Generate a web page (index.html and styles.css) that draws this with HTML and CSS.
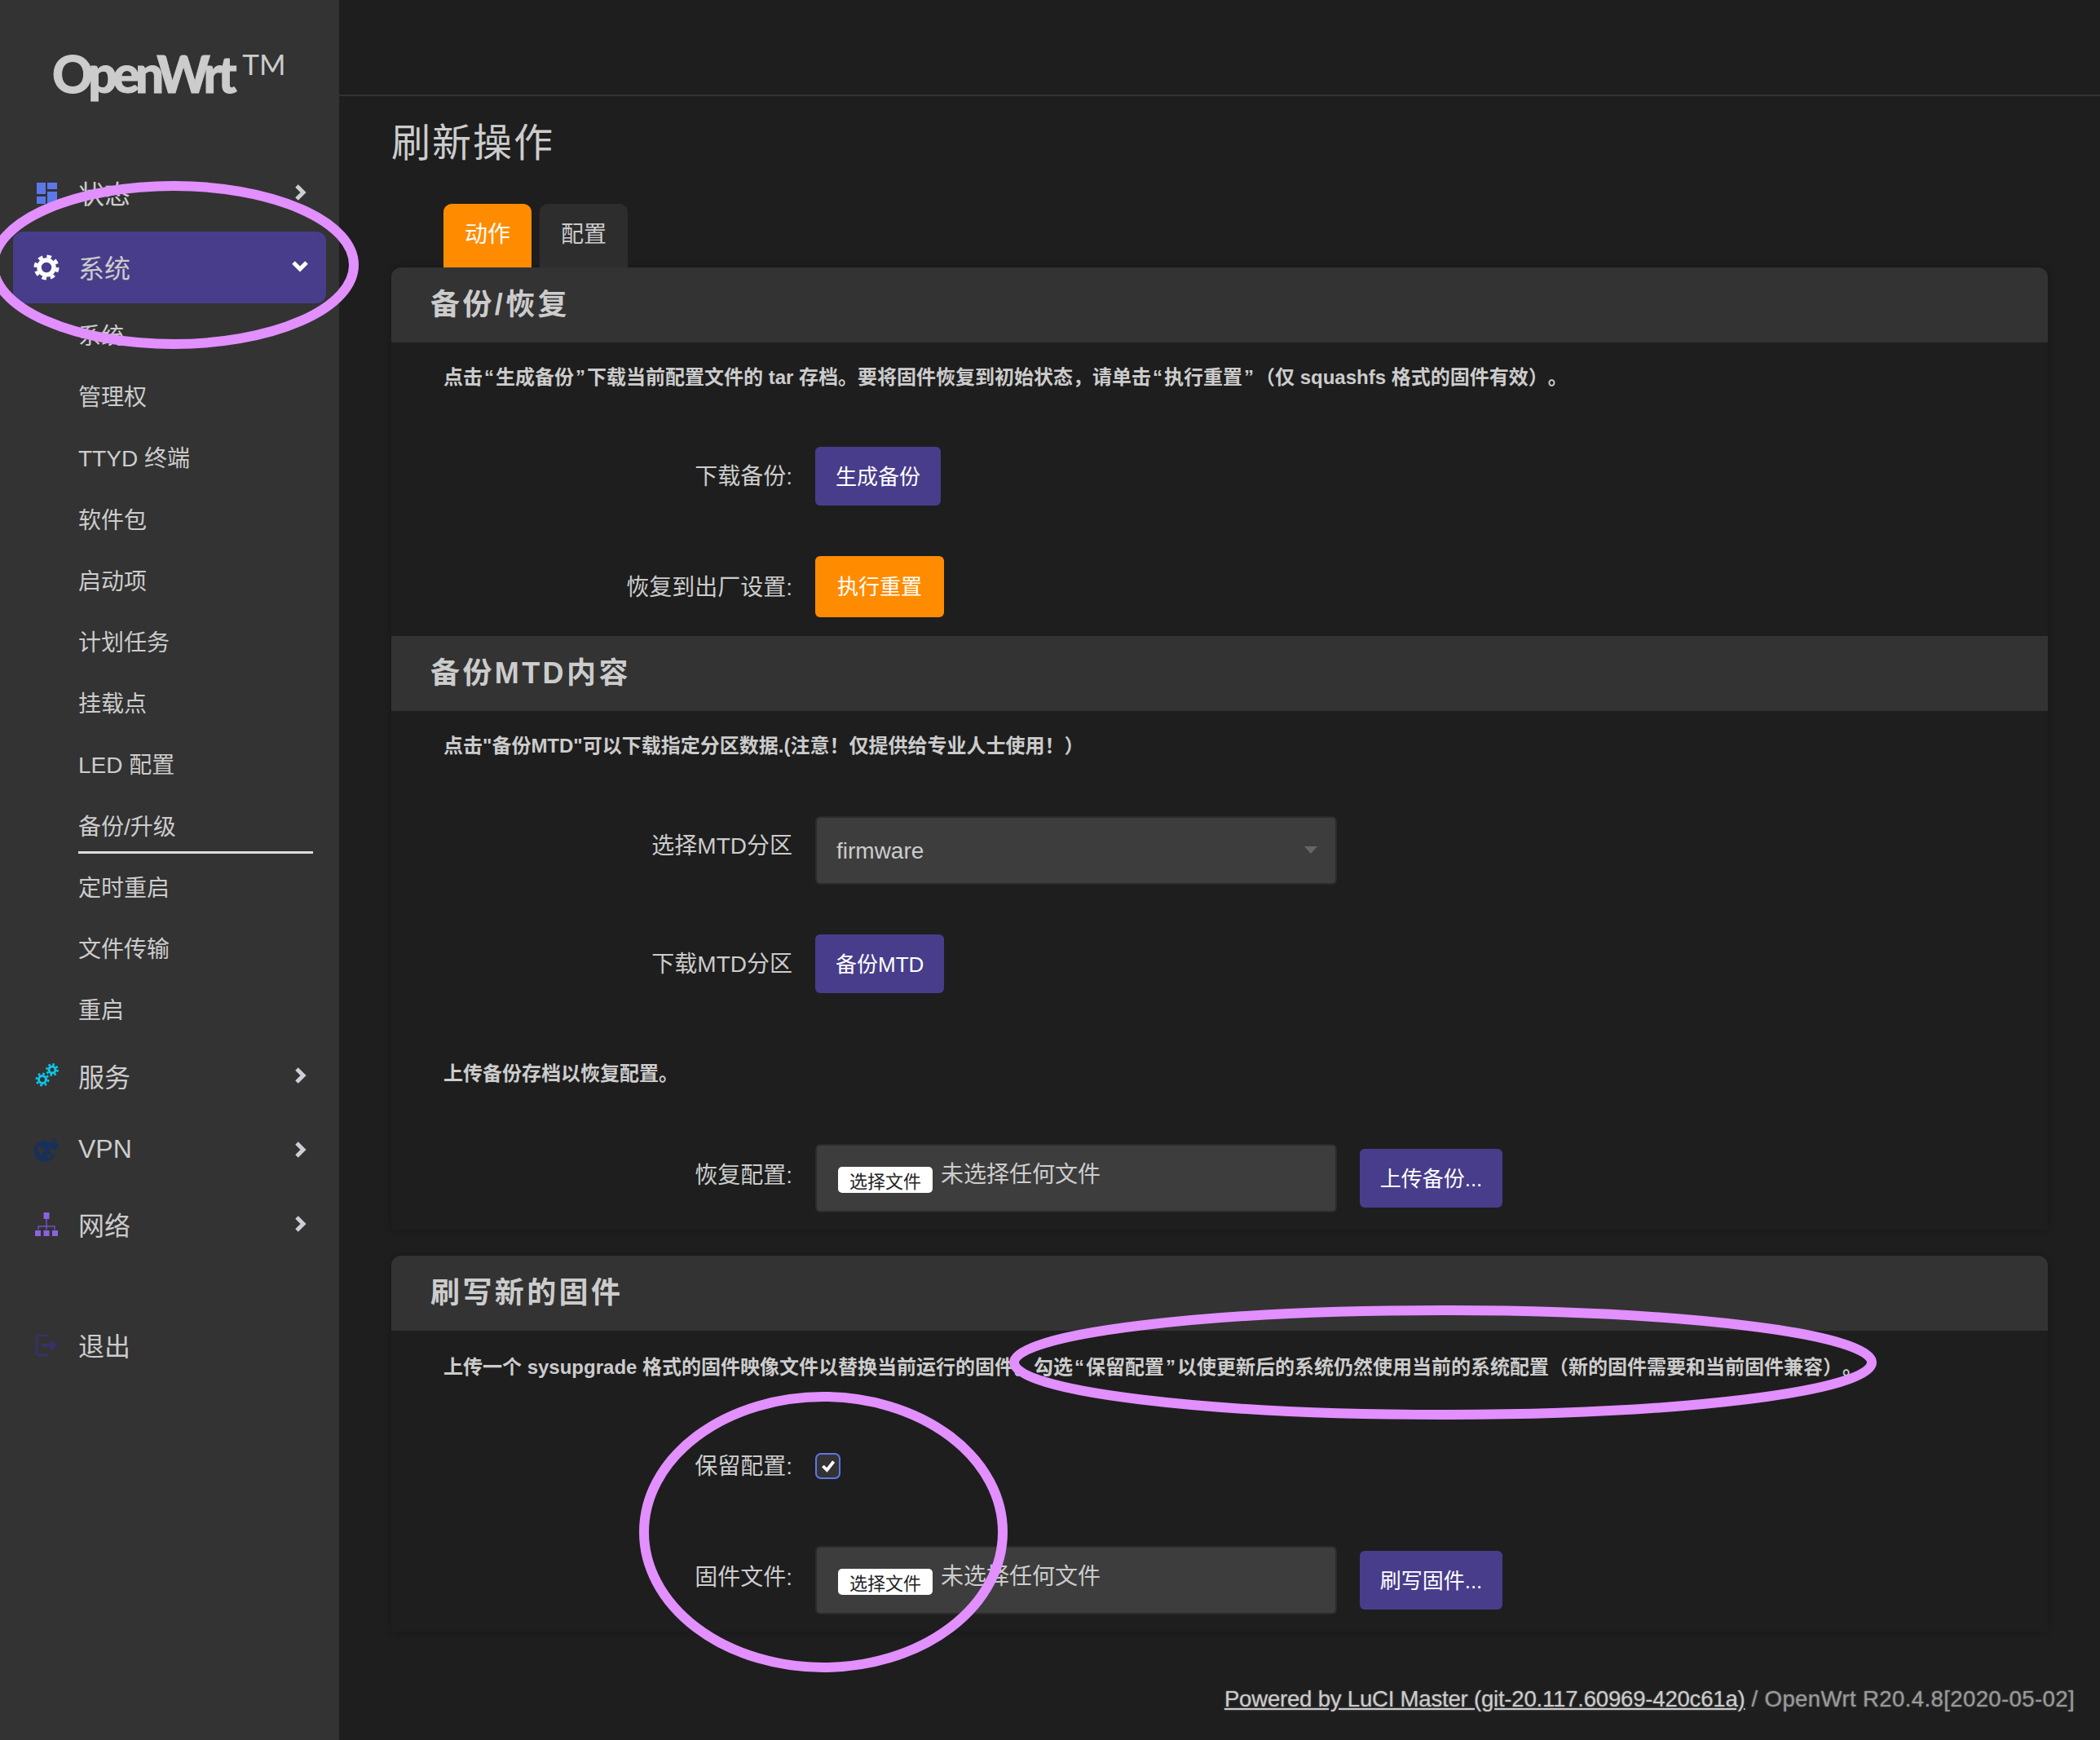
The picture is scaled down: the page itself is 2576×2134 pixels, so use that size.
FILE: index.html
```html
<!DOCTYPE html>
<html lang="zh-CN">
<head>
  <meta charset="UTF-8" />
  <title>刷新操作 - OpenWrt</title>
  <link rel="stylesheet" href="styles.css">
</head>
<body>

  <aside class="sidebar">
    <div class="logo"><span class="logo-name">OpenWrt</span><span class="logo-tm">TM</span></div>

    <a class="nav-item">
      <svg class="nav-icon" viewBox="0 0 34 34"><g fill="#5c77e8"><rect x="5" y="4" width="11" height="14"/><rect x="18" y="4" width="12" height="8"/><rect x="18" y="15" width="12" height="15"/><rect x="5" y="21" width="11" height="9"/></g></svg>
      <span>状态</span>
      <svg class="chev" viewBox="0 0 20 20"><path d="M6 2l8 8-8 8" fill="none" stroke="#ccd0d5" stroke-width="5"/></svg>
    </a>
    <a class="nav-item active">
      <svg class="nav-icon" viewBox="0 0 34 34"><g fill="none" stroke="#fff"><circle cx="17" cy="17" r="9" stroke-width="5.5"/><circle cx="17" cy="17" r="13.5" stroke-width="4" stroke-dasharray="5.6 5"/></g></svg>
      <span>系统</span>
      <svg class="chev" viewBox="0 0 20 20"><path d="M2 5l8 8 8-8" fill="none" stroke="#fff" stroke-width="5"/></svg>
    </a>
    <ul class="sub">
      <li><a>系统</a></li>
      <li><a>管理权</a></li>
      <li><a>TTYD 终端</a></li>
      <li><a>软件包</a></li>
      <li><a>启动项</a></li>
      <li><a>计划任务</a></li>
      <li><a>挂载点</a></li>
      <li><a>LED 配置</a></li>
      <li><a class="current">备份/升级</a></li>
      <li><a>定时重启</a></li>
      <li><a>文件传输</a></li>
      <li><a>重启</a></li>
    </ul>
    <a class="nav-item">
      <svg class="nav-icon" viewBox="0 0 34 34"><g fill="none" stroke="#0dc5e8"><circle cx="12" cy="21" r="4.5" stroke-width="3"/><circle cx="12" cy="21" r="7.2" stroke-width="2.6" stroke-dasharray="2.8 2.85"/><circle cx="24" cy="9" r="4" stroke-width="3"/><circle cx="24" cy="9" r="6.6" stroke-width="2.6" stroke-dasharray="2.6 2.6"/></g></svg>
      <span>服务</span>
      <svg class="chev" viewBox="0 0 20 20"><path d="M6 2l8 8-8 8" fill="none" stroke="#ccd0d5" stroke-width="5"/></svg>
    </a>
    <a class="nav-item">
      <svg class="nav-icon" viewBox="0 0 34 34"><circle cx="15" cy="18" r="13" fill="#16305c"/><path d="M6 12l6 1 3 4-3 3 2 5-4-2-3-5zM16 24l5-3 3 2-4 4z" fill="#333"/><path d="M21 5h11v14l-5 3-6-3z" fill="#333"/><rect x="21.500" y="8" width="9" height="8" rx="1" fill="#16305c"/><path d="M23.500 8V5.500a2.500 2.500 0 0 1 5 0V8" fill="none" stroke="#16305c" stroke-width="1.600"/></svg>
      <span>VPN</span>
      <svg class="chev" viewBox="0 0 20 20"><path d="M6 2l8 8-8 8" fill="none" stroke="#ccd0d5" stroke-width="5"/></svg>
    </a>
    <a class="nav-item">
      <svg class="nav-icon" viewBox="0 0 34 34"><path d="M17 9v14M7 23v-4h20v4" fill="none" stroke="#6f52c0" stroke-width="1.500"/><g fill="#8a63e0"><rect x="13.500" y="2" width="7" height="8"/><rect x="3" y="24" width="7" height="7"/><rect x="13.500" y="24" width="7" height="7"/><rect x="24" y="24" width="7" height="7"/></g></svg>
      <span>网络</span>
      <svg class="chev" viewBox="0 0 20 20"><path d="M6 2l8 8-8 8" fill="none" stroke="#ccd0d5" stroke-width="5"/></svg>
    </a>
    <a class="nav-item logout">
      <svg class="nav-icon" viewBox="0 0 34 34"><path d="M20 5H8a3 3 0 0 0-3 3v18a3 3 0 0 0 3 3h12" fill="none" stroke="#37316b" stroke-width="2.500"/><path d="M11 15h11v-5l9 7-9 7v-5H11z" fill="#37316b"/></svg>
      <span>退出</span>
    </a>
  </aside>

  <div class="content">
    <header class="topbar"></header>

    <main class="main">
      <h2 class="page-title">刷新操作</h2>

      <nav class="tabs">
        <a class="tab active">动作</a>
        <a class="tab">配置</a>
      </nav>

      <section class="panel">
        <h3 class="panel-head">备份/恢复</h3>
        <p class="desc">点击<span class="qt">“</span>生成备份<span class="qt">”</span>下载当前配置文件的 tar 存档。要将固件恢复到初始状态，请单击<span class="qt">“</span>执行重置<span class="qt">”</span>（仅 squashfs 格式的固件有效）。</p>
        <div class="row row-a">
          <label class="row-label">下载备份:</label>
          <div class="field"><button class="btn">生成备份</button></div>
        </div>
        <div class="row row-b">
          <label class="row-label">恢复到出厂设置:</label>
          <div class="field"><button class="btn btn-orange">执行重置</button></div>
        </div>

        <h3 class="panel-head">备份MTD内容</h3>
        <p class="desc">点击"备份MTD"可以下载指定分区数据.(注意！仅提供给专业人士使用！）</p>
        <div class="row row-c">
          <label class="row-label raised">选择MTD分区</label>
          <div class="field">
            <div class="select-wrap"><select class="select"><option>firmware</option></select></div>
          </div>
        </div>
        <div class="row row-d">
          <label class="row-label">下载MTD分区</label>
          <div class="field"><button class="btn">备份MTD</button></div>
        </div>
        <p class="desc desc-upload">上传备份存档以恢复配置。</p>
        <div class="row row-e">
          <label class="row-label raised">恢复配置:</label>
          <div class="field">
            <div class="file-box"><button class="file-btn">选择文件</button><span class="file-name">未选择任何文件</span></div>
            <button class="btn btn-file">上传备份...</button>
          </div>
        </div>
      </section>

      <section class="panel panel-flash">
        <h3 class="panel-head">刷写新的固件</h3>
        <p class="desc">上传一个 sysupgrade 格式的固件映像文件以替换当前运行的固件。勾选<span class="qt">“</span>保留配置<span class="qt">”</span>以使更新后的系统仍然使用当前的系统配置（新的固件需要和当前固件兼容）。</p>
        <div class="row row-f">
          <label class="row-label">保留配置:</label>
          <div class="field">
            <span class="check"><svg viewBox="0 0 20 20"><path d="M4 10l4.500 4.500L16 5" fill="none" stroke="#fff" stroke-width="3.500"/></svg></span>
          </div>
        </div>
        <div class="row row-g">
          <label class="row-label raised">固件文件:</label>
          <div class="field">
            <div class="file-box"><button class="file-btn">选择文件</button><span class="file-name">未选择任何文件</span></div>
            <button class="btn btn-file">刷写固件...</button>
          </div>
        </div>
      </section>

      <footer class="foot"><a>Powered by LuCI Master (git-20.117.60969-420c61a)</a> / OpenWrt R20.4.8[2020-05-02]</footer>
    </main>
  </div>

  <svg class="marks" viewBox="0 0 2576 2134">
    <g fill="none" stroke="#e28fff" stroke-width="12">
      <ellipse cx="213" cy="325" rx="221" ry="97"/>
      <ellipse cx="1770" cy="1671" rx="526" ry="64"/>
      <ellipse cx="1010" cy="1879" rx="220" ry="166"/>
    </g>
  </svg>

</body>
</html>
```

FILE: styles.css
```css
*{margin:0;padding:0;box-sizing:border-box}
html,body{height:100%}
body{position:relative;display:flex;overflow:hidden;background:#1e1e1e;color:#ccc;font-family:"Liberation Sans","Noto Sans CJK SC",sans-serif;font-size:28px;text-spacing-trim:space-all}

/* sidebar */
.sidebar{flex:0 0 416px;background:#333}
.logo{display:flex;align-items:flex-start;height:193px;padding:50px 0 0 64px;color:#ccc;font-family:Lato,sans-serif}
.logo-name{font-size:62px;font-weight:900;line-height:80px;letter-spacing:-5.5px;-webkit-text-stroke:1px #ccc}
.logo-tm{margin:8px 0 0 12px;font-size:35px;line-height:40px}
.nav-item{display:flex;align-items:center;height:88px;margin:0 16px 3px;padding:0 22px 0 24px;border-radius:12px;font-size:32px}
.nav-item span{margin:0 0 3px 22px}
.nav-item.active{background:#483d8b}
.nav-item.logout{margin-top:60px}
.nav-icon{flex:0 0 34px;width:34px;height:34px}
.chev{width:20px;height:20px;margin:0 0 3px auto}
.sub{list-style:none;margin-top:-2px;margin-bottom:1px}
.sub li{height:75.2px}
.sub a{position:relative;display:flex;align-items:center;height:100%;margin:0 32px 0 96px;padding-bottom:1px}
.sub a.current::after{content:"";position:absolute;left:0;right:0;bottom:3px;height:3px;background:#ddd}

/* main column */
.content{flex:1;min-width:0}
.topbar{height:118px;border-bottom:2px solid #333}
.main{padding:0 64px}
.page-title{height:132px;padding-top:30px;font-size:48px;font-weight:400;line-height:56px;letter-spacing:2px}
.tabs{display:flex;gap:10px;padding-left:64px}
.tab{display:flex;align-items:center;justify-content:center;width:108px;height:78px;padding-bottom:8px;border-radius:10px 10px 0 0;background:#2d2d2d}
.tab.active{background:#ff8c00;color:#fff}

/* panels */
.panel{border-radius:12px 12px 0 0;box-shadow:0 0 8px rgba(0,0,0,.25);padding-bottom:21px}
.panel-flash{margin-top:32px}
.panel-head{height:92px;padding-left:48px;background:#333;font-size:36px;font-weight:700;line-height:92px;letter-spacing:3.4px}
.panel>.panel-head:first-child{border-radius:12px 12px 0 0}
.desc{height:40px;margin-top:23px;padding-left:64px;font-size:24px;font-weight:700;line-height:40px;white-space:nowrap}
.desc-upload{margin-top:79px}
.panel-flash .desc{margin-top:25px}
.qt{margin:0 2px}
.row{display:grid;grid-template-columns:492px 1fr;column-gap:28px;align-items:center}
.row-a{margin-top:65px}
.row-b{margin-top:62px;margin-bottom:23px}
.row-c{margin-top:66px}
.row-d{margin-top:61px}
.row-e{margin-top:66px}
.row-f{margin-top:79px}
.row-g{margin-top:76px}
.row-label{margin-bottom:4px;text-align:right}
.row-label.raised{margin-bottom:13px}
.row-c .row-label.raised{margin-bottom:16px}
.field{display:flex;align-items:center}

/* controls */
.btn{height:72px;padding:0 25px 4px;border:none;border-radius:6px;background:#483d8b;color:#fff;font:inherit;font-size:26px}
.btn-orange{height:75px;padding:0 27px 4px;background:#ff8c00}
.btn-file{width:175px;padding:0 0 4px;margin-left:28px}
.select-wrap{position:relative;width:640px}
.select-wrap::after{content:"";position:absolute;top:37px;right:24px;border:8px solid transparent;border-top:9px solid #666;border-bottom:0}
.select{display:block;width:100%;height:84px;padding:0 24px;border:2px solid #2b2b2b;border-radius:6px;background:#3d3d3d;color:#ccc;font:inherit;appearance:none}
.file-box{display:flex;align-items:flex-start;width:640px;height:84px;padding:20px 0 0 26px;border:2px solid #2b2b2b;border-radius:6px;background:#3d3d3d}
.file-btn{flex:0 0 116px;height:32px;margin-top:6px;border:none;border-radius:5px;background:#fff;color:#222;font:inherit;font-size:22px}
.file-name{margin-left:10px;line-height:32px}
.check{display:flex;align-items:center;justify-content:center;width:31px;height:32px;border:2px solid #5c77e8;border-radius:7px;background:#333}
.check svg{width:22px;height:22px}

/* footer */
.foot{margin:62px -33px 0 0;text-align:right;font-size:27.6px;line-height:42px;letter-spacing:.36px;color:#999;text-shadow:0 0 2px #777}
.foot a{color:#ccc;letter-spacing:-.23px;text-decoration:underline}

/* hand-drawn notes lying over the page */
.marks{position:absolute;left:0;top:0;width:2576px;height:2134px;pointer-events:none}
```
